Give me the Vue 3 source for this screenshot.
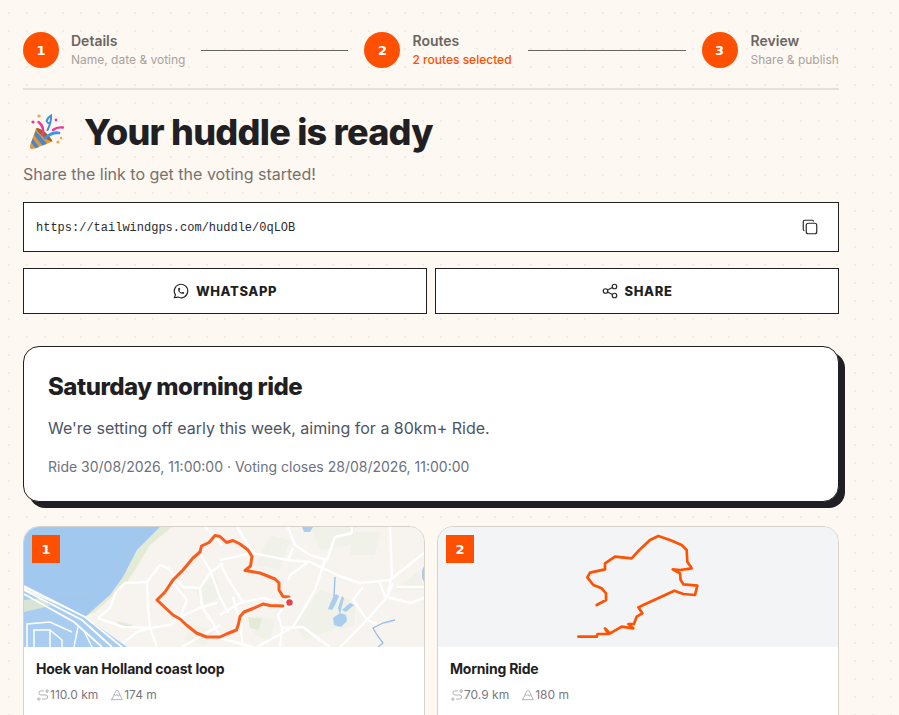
<script setup>
const steps = [
  { n: 1, title: 'Details', sub: 'Name, date & voting', line: 147 },
  { n: 2, title: 'Routes', sub: '2 routes selected', line: 158, active: true },
  { n: 3, title: 'Review', sub: 'Share & publish' },
]
const route1 = 'M283 606L270 605.500L263 604L253 608.500L244 612L240 616.500L238.500 624L236.500 630L226.500 634L220 637L206.500 637L196.500 633L186.500 625L180 619L173 615L157 600L165 592L173 580L183 570L193 558L200 552L201.500 546L209 542.500L215 535.500L220 536.500L226.500 542.500L233 540.500L240 544L248 550L252 556.500L250.500 566L245 570.500L260 573L275 579L279 583L279 590L283 596.500L289 597'
const route2 = 'M445 350L500 350L503 342L535 342L525 325L540 340L575 320L610 325L595 312L612 312L620 290L637 280L625 262L640 255L733 212L760 222L795 225L802 197L760 193L752 180L750 160L728 148L750 150L785 145L772 125L770 90L755 75L720 60L685 48L660 60L628 90L605 115L555 110L525 130L525 148L480 158L472 172L490 195L515 205L528 220L528 240L500 255'
const roads = [
  'M98 618L110 608L116 592L125 583L147 582L160 565L168 568L183 587L200 588L210 573L223 563',
  'M147 582L148 607L150 628L137 632L123 643',
  'M98 618L123 627L150 628',
  'M150 628L170 625L180 617L202 607L217 603',
  'M150 628L157 647',
  'M180 617L187 600L173 583',
  'M200 588L202 607L213 623L222 640',
  'M200 553L210 570L220 597L228 613',
  'M237 527L253 553L287 560L310 562L337 575L360 583L390 580L424 553',
  'M220 560L253 553',
  'M288 527L295 545L310 555L327 560L335 537L352 533L352 527',
  'M293 548L288 560',
  'M325 560L315 590L293 627L257 647',
  'M390 527L392 575L387 597L367 620L340 647',
  'M363 587L353 600L367 620L377 624',
  'M380 583L385 597M393 583L387 597',
  'M397 587L424 587',
  'M387 597L410 603L424 598',
  'M282 628L303 627L320 640L330 647',
  'M280 647L282 628L278 615L287 603',
  'M220 615L240 603L263 598L278 602',
  'M233 597L240 623L243 647',
  'M220 563L227 577L243 602',
  'M288 580L290 575L307 563',
  'M220 638L253 647',
  'M182 647L220 625',
  'M205 527L222 545',
]
const softs = [
  'M310 527H355L350 545L320 550Z',
  'M352 532H380L375 555H350Z',
  'M270 535L290 540L280 570L255 565Z',
  'M320 590L350 600L345 625L305 640L295 625Z',
  'M345 600L355 605L355 625L340 630Z',
  'M195 590L215 575L222 595L205 605Z',
  'M190 625L215 630L205 645L185 640Z',
  'M395 590L420 570L424 590Z',
  'M255 615L275 620L270 640L255 635Z',
]
const greens = [
  'M160 527L172 527L150 545L135 570L125 585L95 612L85 617L110 595L123 577L137 550Z',
  'M117 621L133 625L128 629L118 625Z',
  'M248 617L262 619L258 630L250 628Z',
]
const lakes = [
  'M302 527H313L310 532H304Z',
  'M333 597L336 594L339 596L335 605L332 610L328 609Z',
  'M338 608L342 596L344 598L340 614Z',
  'M333 618L340 613L346 615L347 621L341 627L334 625Z',
  'M342 610L350 603L354 605L346 612Z',
  'M422 570L424 566V582L422 578Z',
]
</script>

<template>
  <main class="page">
    <nav class="stepper">
      <template v-for="step in steps" :key="step.n">
        <div class="step">
          <span class="step-num">{{ step.n }}</span>
          <div class="step-text">
            <div class="step-title">{{ step.title }}</div>
            <div class="step-sub" :class="{ active: step.active }">{{ step.sub }}</div>
          </div>
        </div>
        <span v-if="step.line" class="step-line" :style="{ width: step.line + 'px' }"></span>
      </template>
    </nav>

    <header class="hero">
      <svg class="popper" viewBox="0 0 36 36" aria-hidden="true">
        <path d="M3.500 35C1.800 35 1.500 33 2.500 30L8 14.500C12 13 22 21 24.500 27.500L6.500 34.500Z" fill="#e2973f"/>
        <path d="M6.300 21.500 14.500 31.500 19 29.700 7.800 17ZM3.200 28.500 7.500 34.300 11 33 4.700 24.500Z" fill="#4a86c5"/>
        <path d="M8 14.500C11 12.500 21 20 24.500 27.500 19.500 26.500 11 20.500 8 14.500Z" fill="#9c6227"/>
        <path d="M10.500 8C14.500 11 16 16 14.500 21" fill="none" stroke="#f0389a" stroke-width="2.600" stroke-linecap="round"/>
        <path d="M19.500 16C21 13 23.500 8 23 1.500 20.500 3 18.500 5 19 7.500 19.500 9.500 21.500 9.500 22.500 8.500" fill="none" stroke="#3f8fdc" stroke-width="2" stroke-linecap="round"/>
        <path d="M17 24C20 22 24 17.500 31 19" fill="none" stroke="#3f95e0" stroke-width="2.800" stroke-linecap="round"/>
        <path d="M25 16C28 13.500 31 13 35 13.500" fill="none" stroke="#f0389a" stroke-width="2.400" stroke-linecap="round"/>
        <circle cx="5" cy="8" r="1.600" fill="#f0389a"/>
        <circle cx="11" cy="2" r="1.600" fill="#f1a64a"/>
        <circle cx="28" cy="6" r="1.400" fill="#f0389a"/>
        <circle cx="33" cy="24" r="1.200" fill="#f1a64a"/>
        <circle cx="30" cy="28" r="1.600" fill="#f1a64a"/>
      </svg>
      <h1>Your huddle is ready</h1>
    </header>
    <p class="lead">Share the link to get the voting started!</p>

    <div class="link-box">
      <span class="url">https://tailwindgps.com/huddle/0qLOB</span>
      <svg class="icon copy" viewBox="0 0 24 24" aria-hidden="true">
        <path d="M7 9.667a2.667 2.667 0 0 1 2.667 -2.667h8.666a2.667 2.667 0 0 1 2.667 2.667v8.666a2.667 2.667 0 0 1 -2.667 2.667h-8.666a2.667 2.667 0 0 1 -2.667 -2.667z"/>
        <path d="M4.012 16.737a2.005 2.005 0 0 1 -1.012 -1.737v-10c0 -1.100 .9 -2 2 -2h10c.75 0 1.158 .385 1.500 1"/>
      </svg>
    </div>

    <div class="actions">
      <button class="action" type="button">
        <svg class="icon" viewBox="0 0 24 24" aria-hidden="true">
          <path d="M3 21l1.650 -3.800a9 9 0 1 1 3.400 2.900l-5.050 .9"/>
          <path d="M9 10a.5 .5 0 0 0 1 0v-1a.5 .5 0 0 0 -1 0v1a5 5 0 0 0 5 5h1a.5 .5 0 0 0 0 -1h-1a.5 .5 0 0 0 0 1"/>
        </svg>
        WHATSAPP
      </button>
      <button class="action" type="button">
        <svg class="icon" viewBox="0 0 24 24" aria-hidden="true">
          <circle cx="6" cy="12" r="3"/><circle cx="18" cy="6" r="3"/><circle cx="18" cy="18" r="3"/>
          <path d="M8.700 10.700l6.600 -3.400M8.700 13.300l6.600 3.400"/>
        </svg>
        SHARE
      </button>
    </div>

    <section class="summary">
      <h2>Saturday morning ride</h2>
      <p class="desc">We're setting off early this week, aiming for a 80km+ Ride.</p>
      <p class="meta">Ride 30/08/2026, 11:00:00 · Voting closes 28/08/2026, 11:00:00</p>
    </section>

    <section class="routes">
      <article class="route">
        <div class="map">
          <svg class="map-svg" viewBox="24 527 400 120" preserveAspectRatio="none" aria-hidden="true">
            <rect x="24" y="527" width="400" height="120" fill="#f7f4ef"/>
            <path v-for="g in softs" :key="g" :d="g" fill="#f0f1e8"/>
            <path v-for="g in greens" :key="g" :d="g" fill="#e3ebd5"/>
            <path d="M24 527H160L137 550L123 577L110 595L85 617L24 586Z" fill="#a1c8ef"/>
            <path d="M24 590L85 617L127 647H24Z" fill="#a8cdf1"/>
            <path d="M24 600L42 598L50 606L24 612Z" fill="#d8e4d6"/>
            <path d="M90 597L150 527M48 599H90" fill="none" stroke="#b5c2cc" stroke-width=".6"/>
            <path d="M24 586L85 617L122 647M24 590L82 620L112 647M24 594L74 622L102 647" fill="none" stroke="#fff" stroke-width="1.800"/>
            <path d="M27 647V624L50 622L72 632M34 647V630L50 630L62 640V647M50 630V647M78 627L74 647M84 631L92 647" fill="none" stroke="#fff" stroke-width="1.500"/>
            <path v-for="r in roads" :key="r" :d="r" fill="none" stroke="#fff" stroke-width="2.400" stroke-linejoin="round"/>
            <path v-for="l in lakes" :key="l" :d="l" fill="#a9cdee"/>
            <path d="M334 596 335 577M395 620 383 623 373 628 377 635 383 643 378 647" fill="none" stroke="#93bfea" stroke-width="1.300"/>
            <path :d="route1" fill="none" stroke="#f95c1c" stroke-width="3" stroke-linejoin="round" stroke-linecap="round"/>
            <circle cx="289.500" cy="602.500" r="5" fill="#fff" opacity=".85"/>
            <circle cx="289.500" cy="602.500" r="3.200" fill="#ee3f47"/>
          </svg>
          <span class="badge">1</span>
        </div>
        <div class="route-body">
          <h3>Hoek van Holland coast loop</h3>
          <div class="stats">
            <span class="stat">
              <svg class="stat-icon" viewBox="0 0 24 24" aria-hidden="true"><path d="M3 19a2 2 0 1 0 4 0a2 2 0 0 0 -4 0"/><path d="M19 7a2 2 0 1 0 0 -4a2 2 0 0 0 0 4z"/><path d="M11 19h5.500a3.500 3.500 0 0 0 0 -7h-8a3.500 3.500 0 0 1 0 -7h4.500"/></svg>
              110.0 km
            </span>
            <span class="stat">
              <svg class="stat-icon" viewBox="0 0 24 24" aria-hidden="true"><path d="M3 20h18l-6.921 -14.612a2.300 2.300 0 0 0 -4.158 0l-6.921 14.612z"/><path d="M7.500 11l2 2.500l2.500 -2.500l2 3l2.500 -2"/></svg>
              174 m
            </span>
          </div>
        </div>
      </article>

      <article class="route">
        <div class="map plain">
          <svg class="map-svg" viewBox="24 21 1200 360" preserveAspectRatio="none" aria-hidden="true">
            <path :d="route2" fill="none" stroke="#ff5200" stroke-width="8" stroke-linejoin="round" stroke-linecap="round"/>
          </svg>
          <span class="badge">2</span>
        </div>
        <div class="route-body">
          <h3>Morning Ride</h3>
          <div class="stats">
            <span class="stat">
              <svg class="stat-icon" viewBox="0 0 24 24" aria-hidden="true"><path d="M3 19a2 2 0 1 0 4 0a2 2 0 0 0 -4 0"/><path d="M19 7a2 2 0 1 0 0 -4a2 2 0 0 0 0 4z"/><path d="M11 19h5.500a3.500 3.500 0 0 0 0 -7h-8a3.500 3.500 0 0 1 0 -7h4.500"/></svg>
              70.9 km
            </span>
            <span class="stat">
              <svg class="stat-icon" viewBox="0 0 24 24" aria-hidden="true"><path d="M3 20h18l-6.921 -14.612a2.300 2.300 0 0 0 -4.158 0l-6.921 14.612z"/><path d="M7.500 11l2 2.500l2.500 -2.500l2 3l2.500 -2"/></svg>
              180 m
            </span>
          </div>
        </div>
      </article>
    </section>
  </main>
</template>

<style>
html, body { margin: 0; height: 715px; overflow: hidden; background: #fdf8f1; }
</style>

<style scoped>
* { box-sizing: border-box; }
.page {
  height: 715px;
  overflow: hidden;
  padding: 32px 60px 0 23px;
  font-family: Inter, "Noto Sans", sans-serif;
  color: #1f1f24;
  background-color: #fdf8f1;
  background-image: radial-gradient(circle, #f0ebe3 .9px, transparent 1px);
  background-size: 18px 18px;
  background-position: 0 4px;
}
.stepper {
  display: flex;
  align-items: center;
  gap: 16px;
  padding-bottom: 20px;
  border-bottom: 2px solid #e5e1da;
}
.step { display: flex; align-items: center; gap: 12px; }
.step:last-of-type { gap: 13px; }
.step-num {
  width: 36px;
  height: 36px;
  border-radius: 50%;
  background: #ff4f00;
  color: #fff;
  display: flex;
  align-items: center;
  justify-content: center;
  font-family: "DejaVu Sans", sans-serif;
  font-weight: 700;
  font-size: 13px;
}
.step-text { height: 36px; }
.step-title { font-size: 14px; line-height: 18px; font-weight: 600; color: #6b6560; }
.step-sub { margin-top: 1px; font-size: 12px; line-height: 18px; color: #a8a29e; }
.step-sub.active { color: #ff4f00; font-weight: 500; }
.step-line { flex: none; height: 1px; background: #6b6560; }
.hero { display: flex; align-items: center; gap: 20px; margin-top: 20px; padding-left: 5px; height: 44px; }
.popper { width: 36px; height: 36px; flex: none; }
h1 { margin: 0; font-size: 36px; line-height: 44px; font-weight: 800; letter-spacing: -0.75px; color: #1f1f24; }
.lead { margin: 8px 0 0; font-size: 16px; line-height: 24px; color: #78716c; }
.link-box {
  margin-top: 16px;
  height: 50px;
  background: #fff;
  border: 1px solid #1f1f24;
  display: flex;
  align-items: center;
  justify-content: space-between;
  padding: 0 19px 0 12px;
}
.url { padding-top: 2px; font-family: "Liberation Mono", monospace; font-size: 12px; color: #2a2a2e; }
.icon { width: 18px; height: 18px; fill: none; stroke: #2a2a2e; stroke-width: 1.600; stroke-linecap: round; stroke-linejoin: round; flex: none; }
.actions { margin-top: 16px; display: grid; grid-template-columns: 1fr 1fr; gap: 8px; }
.action {
  height: 46px;
  background: #fff;
  border: 1px solid #1f1f24;
  display: flex;
  align-items: center;
  justify-content: center;
  gap: 6px;
  font-family: Inter, sans-serif;
  font-size: 13px;
  font-weight: 800;
  letter-spacing: .6px;
  color: #1f1f24;
  padding: 0 1px 0 0;
}
.summary {
  margin-top: 32px;
  height: 156px;
  background: #fff;
  border: 1px solid #1f1f24;
  border-radius: 16px;
  box-shadow: 6px 6px 0 #1f1f24;
  padding: 24px;
}
h2 { margin: 0; font-size: 24px; line-height: 32px; font-weight: 800; letter-spacing: -0.5px; color: #1f1f24; }
.desc { margin: 13px 0 0; font-size: 16px; line-height: 24px; color: #4b5563; }
.meta { margin: 17px 0 0; font-size: 14px; line-height: 20px; color: #6b7280; }
.routes { margin-top: 24px; display: grid; grid-template-columns: 1fr 1fr; gap: 12px; }
.route { border: 1px solid #d6d3cd; border-radius: 16px; overflow: hidden; background: #fff; height: 260px; }
.map { position: relative; height: 120px; }
.map.plain { background: #f3f4f6; }
.map-svg { display: block; width: 100%; height: 100%; }
.badge {
  position: absolute;
  top: 8px;
  left: 8px;
  width: 28px;
  height: 28px;
  background: #ff4f00;
  color: #fff;
  display: flex;
  align-items: center;
  justify-content: center;
  font-family: "DejaVu Sans", sans-serif;
  font-weight: 700;
  font-size: 13px;
}
.route-body { padding: 12px; }
h3 { margin: 0; font-size: 14px; line-height: 20px; font-weight: 700; letter-spacing: -0.21px; color: #1f1f24; }
.stats { margin-top: 6px; display: flex; gap: 12px; font-size: 12px; line-height: 20px; color: #78787f; }
.stat { display: flex; align-items: center; gap: 0; }
.stat-icon { width: 14px; height: 14px; fill: none; stroke: #a3a3a8; stroke-width: 1.400; stroke-linecap: round; stroke-linejoin: round; }
</style>
